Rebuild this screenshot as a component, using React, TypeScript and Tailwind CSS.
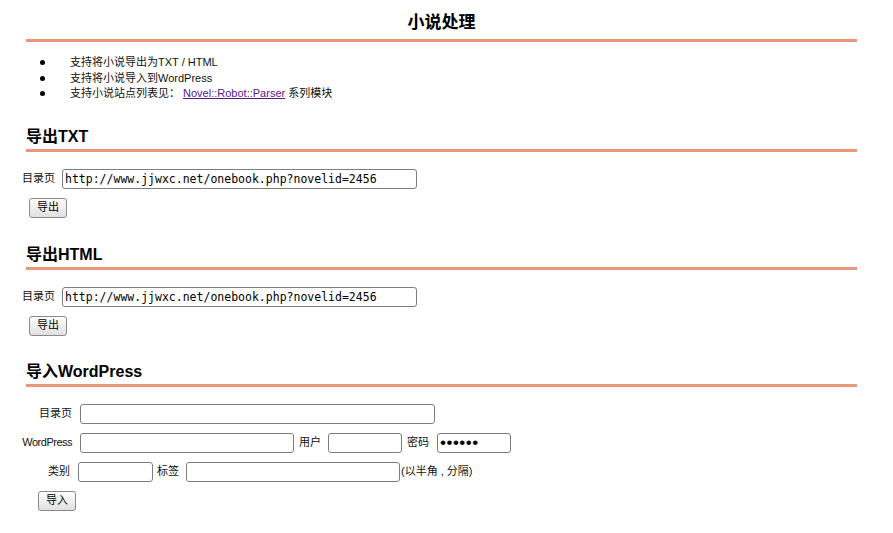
import React from "react";

const URL = "http://www.jjwxc.net/onebook.php?novelid=2456";

function Field({ w, value, type = "text" }: { w: string; value?: string; type?: string }) {
  const font =
    type === "password"
      ? "font-['Liberation_Sans',sans-serif] text-[17px] tracking-[0.5px] leading-none"
      : "font-['DejaVu_Sans_Mono',monospace] text-[11.5px]";
  return (
    <input
      type={type}
      defaultValue={value}
      className={`${w} ${font} h-[20px] rounded-[3px] border border-[#7d7d7d] bg-white px-[2px] text-black outline-none`}
    />
  );
}

function Btn({ label, className = "" }: { label: string; className?: string }) {
  return (
    <button
      type="button"
      className={`h-[20px] w-[38px] rounded-[3px] border border-[#8a8a8a] bg-linear-to-b from-[#fdfdfd] to-[#e0e0e0] text-[11px] leading-none text-black ${className}`}
    >
      {label}
    </button>
  );
}

function Heading({ children, className = "" }: { children: React.ReactNode; className?: string }) {
  return (
    <h2
      className={`ml-[26px] mr-[36px] border-b-[3px] border-[#e9967a] text-[16px] font-bold leading-[24px] text-black ${className}`}
    >
      {children}
    </h2>
  );
}

function Label({ text, w, className = "" }: { text: string; w: string; className?: string }) {
  return <span className={`${w} shrink-0 text-right ${className}`}>{text}</span>;
}

export default function App() {
  return (
    <div className="min-h-[533px] w-[893px] bg-white font-['Liberation_Sans','Noto_Sans_CJK_SC',sans-serif] text-[11px] text-[#111]">
      {/* 标题 */}
      <h1 className="ml-[26px] mr-[36px] border-b-[3px] border-[#e9967a] pt-[7px] text-center text-[17px] font-bold leading-[32px] text-black">
        小说处理
      </h1>

      <ul className="mt-[13px] leading-[15.5px]">
        {[
          <>支持将小说导出为TXT / HTML</>,
          <>支持将小说导入到WordPress</>,
          <>
            支持小说站点列表见：{" "}
            <a href="#" className="text-[#551a8b] underline">
              Novel::Robot::Parser
            </a>{" "}
            系列模块
          </>,
        ].map((item, i) => (
          <li key={i} className="flex items-center">
            <span className="ml-[40px] mr-[25px] h-[5px] w-[5px] rounded-full bg-black" />
            <span>{item}</span>
          </li>
        ))}
      </ul>

      {/* 导出TXT */}
      <Heading className="mt-[23px]">导出TXT</Heading>
      <div className="ml-[22px] mt-[17px] flex items-center">
        <span>目录页</span>
        <div className="ml-[7px]">
          <Field w="w-[355px]" value={URL} />
        </div>
      </div>
      <Btn label="导出" className="ml-[29px] mt-[9px] block" />

      {/* 导出HTML */}
      <Heading className="mt-[25px]">导出HTML</Heading>
      <div className="ml-[22px] mt-[17px] flex items-center">
        <span>目录页</span>
        <div className="ml-[7px]">
          <Field w="w-[355px]" value={URL} />
        </div>
      </div>
      <Btn label="导出" className="ml-[29px] mt-[9px] block" />

      {/* 导入WordPress */}
      <Heading className="mt-[24px]">导入WordPress</Heading>
      <div className="ml-[22px] mt-[17px] flex flex-col gap-[9px]">
        <div className="flex items-center">
          <Label text="目录页" w="w-[50px]" />
          <div className="ml-[8px]">
            <Field w="w-[355px]" />
          </div>
        </div>
        <div className="flex items-center">
          <Label text="WordPress" w="w-[50px]" className="tracking-[-0.5px]" />
          <div className="ml-[8px]">
            <Field w="w-[214px]" />
          </div>
          <span className="ml-[5px]">用户</span>
          <div className="ml-[7px]">
            <Field w="w-[74px]" />
          </div>
          <span className="ml-[5px]">密码</span>
          <div className="ml-[8px]">
            <Field w="w-[74px]" type="password" value="123456" />
          </div>
        </div>
        <div className="flex items-center">
          <Label text="类别" w="w-[48px]" />
          <div className="ml-[8px]">
            <Field w="w-[75px]" />
          </div>
          <span className="ml-[4px]">标签</span>
          <div className="ml-[7px]">
            <Field w="w-[214px]" />
          </div>
          <span className="ml-[1px]">(以半角 , 分隔)</span>
        </div>
        <Btn label="导入" className="ml-[16px] block" />
      </div>
    </div>
  );
}
